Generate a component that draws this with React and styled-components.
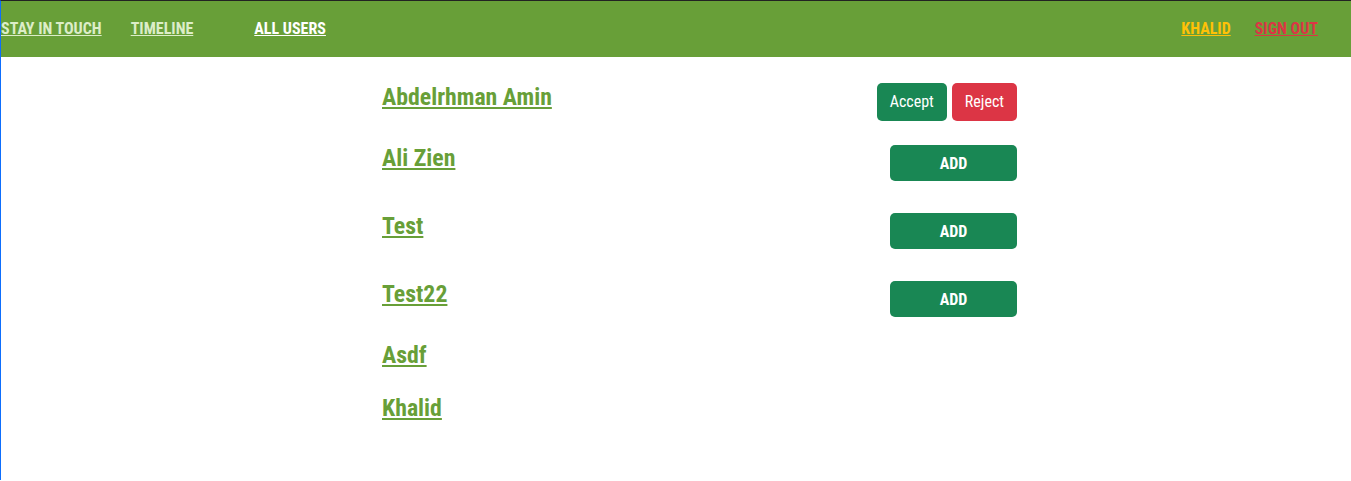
import React from "react";
import styled, { createGlobalStyle } from "styled-components";

const Global = createGlobalStyle`
  html, body { margin: 0; padding: 0; background: #fff; }
  body {
    font-family: "Roboto Condensed", Roboto, "Liberation Sans", sans-serif;
    font-stretch: condensed;
    border-top: 1px solid #222;
    border-left: 1px solid #0d6efd;
    min-height: 480px;
    box-sizing: border-box;
  }
  * { box-sizing: border-box; }
`;

const Nav = styled.nav`
  display: flex;
  align-items: center;
  justify-content: space-between;
  height: 56px;
  background: #689f38;
  padding: 0 33px 2px 0;
`;

const NavGroup = styled.div`
  display: flex;
  align-items: center;
  gap: ${(p) => p.$gap}px;
`;

const NavLink = styled.a`
  font-size: 16px;
  font-weight: 700;
  text-transform: uppercase;
  text-decoration: underline;
  color: ${(p) => p.$color};
  margin-left: ${(p) => p.$ml || 0}px;
  cursor: pointer;
`;

const Main = styled.main`
  width: 635px;
  margin-left: 381px;
  padding-top: 26px;
  display: flex;
  flex-direction: column;
`;

const Row = styled.div`
  display: flex;
  justify-content: space-between;
  align-items: flex-start;
  margin-bottom: ${(p) => p.$mb}px;
`;

const Name = styled.a`
  font-size: 23.8px;
  line-height: 28px;
  font-weight: 700;
  color: #689f38;
  text-decoration: underline;
  cursor: pointer;
`;

const Actions = styled.div`
  display: flex;
  gap: 5px;
`;

const Btn = styled.button`
  font-family: inherit;
  font-stretch: condensed;
  font-size: 16px;
  line-height: 24px;
  padding: 7px 13px;
  border: none;
  border-radius: 5px;
  color: #fff;
  background: ${(p) => p.$bg};
`;

const AddBtn = styled.button`
  font-family: inherit;
  font-stretch: condensed;
  font-size: 16px;
  font-weight: 700;
  width: 127px;
  height: 36px;
  margin-top: 1px;
  border: none;
  border-radius: 5px;
  color: #fff;
  background: #198754;
`;

const users = [
  { name: "Abdelrhman Amin", kind: "request", mb: 23 },
  { name: "Ali Zien", kind: "add", mb: 31 },
  { name: "Test", kind: "add", mb: 31 },
  { name: "Test22", kind: "add", mb: 24 },
  { name: "Asdf", kind: "none", mb: 25 },
  { name: "Khalid", kind: "none", mb: 25 },
];

export default function App() {
  return (
    <>
      <Global />
      <Nav>
        <NavGroup $gap={0}>
          <NavLink $color="#dcedc8">Stay in touch</NavLink>
          <NavLink $color="#dcedc8" $ml={29}>Timeline</NavLink>
          <NavLink $color="#ffffff" $ml={61}>All users</NavLink>
        </NavGroup>
        <NavGroup $gap={24}>
          <NavLink $color="#ffc107">Khalid</NavLink>
          <NavLink $color="#dc3545">Sign out</NavLink>
        </NavGroup>
      </Nav>
      <Main>
        {users.map((u) => (
          <Row key={u.name} $mb={u.mb}>
            <Name>{u.name}</Name>
            {u.kind === "request" && (
              <Actions>
                <Btn $bg="#198754">Accept</Btn>
                <Btn $bg="#dc3545">Reject</Btn>
              </Actions>
            )}
            {u.kind === "add" && <AddBtn>ADD</AddBtn>}
          </Row>
        ))}
      </Main>
    </>
  );
}
